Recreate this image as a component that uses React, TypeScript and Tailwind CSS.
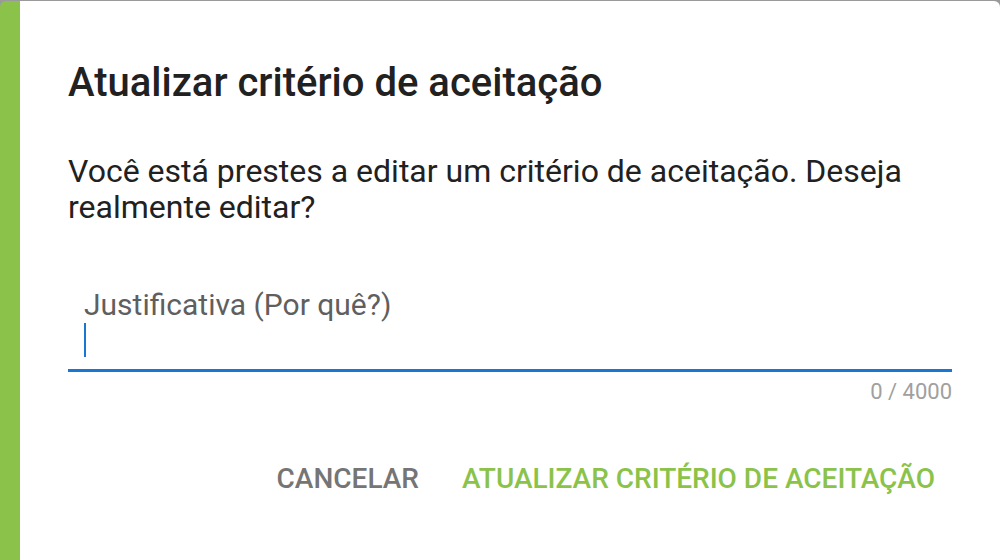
import React from "react";

const font = { fontFamily: "Roboto, 'Noto Sans', Arial, sans-serif" };

const Caret = () => <div className="h-[34px] w-[2px] bg-[#1976d2]" />;

export default function App() {
  return (
    <div className="h-[560px] w-[1000px] overflow-hidden bg-[#9a9a9a] pt-[1px]" style={font}>
      <div className="flex h-[580px] w-[1000px] flex-col rounded-[6px] border-l-[20px] border-[#8bc34a] bg-white pl-[48px] pr-[48px] pt-[58px]">
        {/* Title */}
        <h2 className="text-[40px] font-medium leading-[48px] text-[#212121]">
          Atualizar critério de aceitação
        </h2>

        {/* Body */}
        <p className="mt-[46px] text-[32px] leading-[36px] text-[#212121]">
          Você está prestes a editar um critério de aceitação. Deseja realmente editar?
        </p>

        {/* Text field */}
        <div className="mt-[63px] flex flex-col">
          <div className="px-[16px]">
            <label className="block text-[30px] leading-[34px] text-[#5f5f5f]">Justificativa (Por quê?)</label>
            <div className="flex h-[47px] items-start pt-[1px]">
              <Caret />
            </div>
          </div>
          <div className="h-[3px] bg-[#1976d2]" />
          <div className="mt-[8px] text-right text-[22px] leading-[24px] text-[#a0a0a0]">0 / 4000</div>
        </div>

        {/* Actions */}
        <div className="mt-[59px] flex justify-end gap-[10px]">
          <button className="px-[16px] text-[28px] font-medium uppercase leading-[32px] text-[#757575]">
            Cancelar
          </button>
          <button className="px-[17px] text-[28px] font-medium uppercase leading-[32px] text-[#8bc34a]">
            Atualizar critério de aceitação
          </button>
        </div>
      </div>
    </div>
  );
}
